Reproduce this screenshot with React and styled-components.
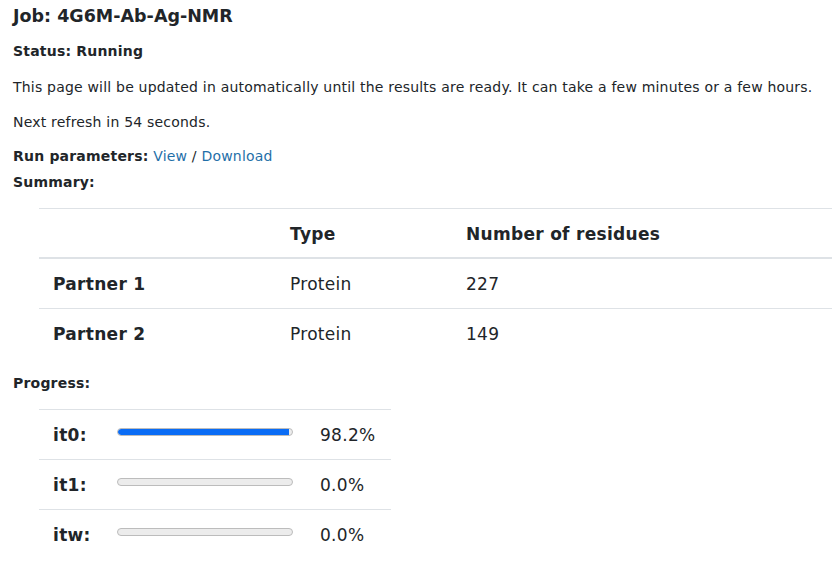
import React from 'react';
import styled, {createGlobalStyle} from 'styled-components';

const partners = [
  {name: 'Partner 1', type: 'Protein', residues: 227},
  {name: 'Partner 2', type: 'Protein', residues: 149},
];

const progress = [
  {label: 'it0:', value: 98.2},
  {label: 'it1:', value: 0},
  {label: 'itw:', value: 0},
];

const GlobalStyle = createGlobalStyle`
body{
  margin: 0;
  background: #fff;
  color: #212529;
  font-family: Verdana, "DejaVu Sans", sans-serif;
  font-size: 14px;
  line-height: 1.5;
  letter-spacing: 0.2px;
  overflow-x: hidden;
}
`;

const Page = styled.div`
padding: 6px 13px 0;
`;

const Title = styled.h1`
font-size: 17.5px;
line-height: 21px;
font-weight: 700;
letter-spacing: 0;
margin: 0 0 14px;
`;

const Line = styled.p`
margin: 0 0 ${props => props.gap || 14}px;
font-weight: ${props => props.bold ? 700 : 400};
`;

const Label = styled.span`
font-weight: 700;
`;

const Link = styled.a`
color: #1f6fa8;
text-decoration: none;
cursor: pointer;
&:hover{
  text-decoration: underline;
}
`;

const Table = styled.table`
border-collapse: collapse;
table-layout: fixed;
margin: 15px 0 15px 26px;
width: ${props => props.width || '100%'};
font-size: 17px;
line-height: 21px;
letter-spacing: 0.3px;

th, td{
  text-align: left;
  padding: 15px 14px 13px;
  border-top: 1px solid #dee2e6;
}
th{
  font-weight: 700;
  padding-bottom: 12px;
  border-bottom: 2px solid #dee2e6;
}
`;

const RowHead = styled.td`
font-weight: 700;
`;

const BarCell = styled.td`
vertical-align: top;
`;

const Track = styled.div`
width: 176px;
height: 8px;
box-sizing: border-box;
margin-top: 3px;
border: 1px solid #bcbcbc;
border-radius: 5px;
background: #ececec;
overflow: hidden;
`;

const Fill = styled.div`
height: 100%;
background: #0a6cf5;
border-radius: 4px 0 0 4px;
`;

const App = () => {
  return(
  <Page>
    <GlobalStyle/>
    <Title>Job: 4G6M-Ab-Ag-NMR</Title>
    <Line bold gap={15}>Status: Running</Line>
    <Line>This page will be updated in automatically until the results are ready. It can take a few minutes or a few hours.</Line>
    <Line gap={13}>Next refresh in 54 seconds.</Line>
    <Line gap={5}><Label>Run parameters:</Label> <Link>View</Link> / <Link>Download</Link></Line>
    <Line bold gap={0}>Summary:</Line>

    <Table>
      <colgroup>
        <col style={{width: 237}}/>
        <col style={{width: 176}}/>
        <col/>
      </colgroup>
      <thead>
        <tr><th></th><th>Type</th><th>Number of residues</th></tr>
      </thead>
      <tbody>
        {partners.map(p => (
          <tr key={p.name}>
            <RowHead>{p.name}</RowHead>
            <td>{p.type}</td>
            <td>{p.residues}</td>
          </tr>
        ))}
      </tbody>
    </Table>

    <Line bold gap={0}>Progress:</Line>
    <Table width="352px">
      <colgroup>
        <col style={{width: 64}}/>
        <col style={{width: 203}}/>
        <col/>
      </colgroup>
      <tbody>
        {progress.map(p => (
          <tr key={p.label}>
            <RowHead>{p.label}</RowHead>
            <BarCell><Track><Fill style={{width: p.value + '%'}}/></Track></BarCell>
            <td>{p.value.toFixed(1)}%</td>
          </tr>
        ))}
      </tbody>
    </Table>
  </Page>
  );
};

export default App;
